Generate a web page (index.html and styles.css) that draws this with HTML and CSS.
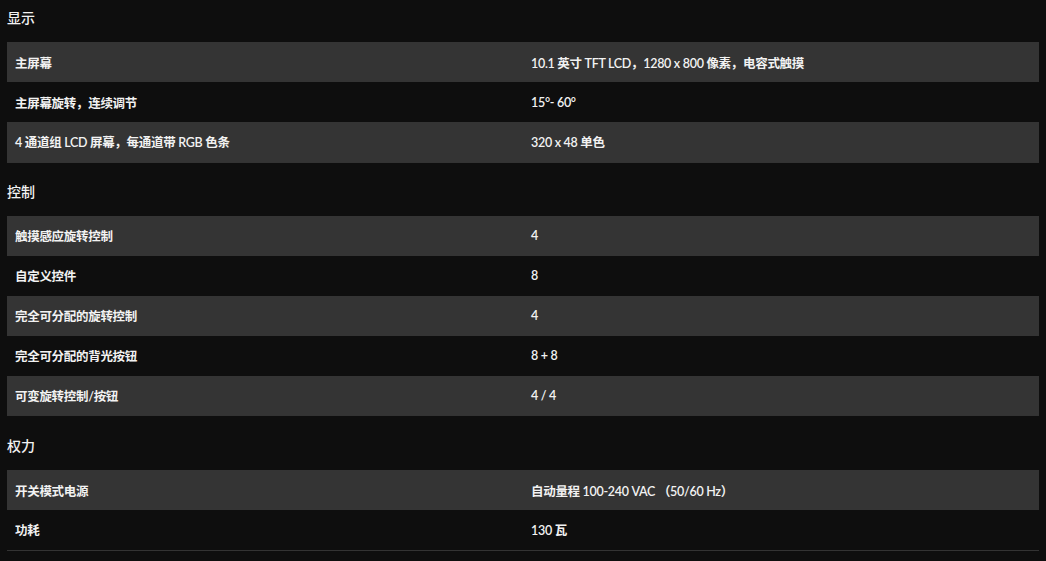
FILE: index.html
```html
<!DOCTYPE html>
<html lang="zh-CN">
<head>
<meta charset="utf-8">
<title>规格</title>
<link rel="stylesheet" href="styles.css">
</head>
<body>
<div class="specs">
  <section class="group">
    <h3 class="group-title">显示</h3>
    <table class="spec-table">
      <tr><td>主屏幕</td><td>10.1 英寸 TFT LCD，1280 x 800 像素，电容式触摸</td></tr>
      <tr><td>主屏幕旋转，连续调节</td><td>15°- 60°</td></tr>
      <tr><td>4 通道组 LCD 屏幕，每通道带 RGB 色条</td><td>320 x 48 单色</td></tr>
    </table>
  </section>
  <section class="group">
    <h3 class="group-title">控制</h3>
    <table class="spec-table">
      <tr><td>触摸感应旋转控制</td><td>4</td></tr>
      <tr><td>自定义控件</td><td>8</td></tr>
      <tr><td>完全可分配的旋转控制</td><td>4</td></tr>
      <tr><td>完全可分配的背光按钮</td><td>8 + 8</td></tr>
      <tr><td>可变旋转控制/按钮</td><td>4 / 4</td></tr>
    </table>
  </section>
  <section class="group">
    <h3 class="group-title">权力</h3>
    <table class="spec-table">
      <tr><td>开关模式电源</td><td>自动量程 100-240 VAC （50/60 Hz）</td></tr>
      <tr><td>功耗</td><td>130 瓦</td></tr>
    </table>
  </section>
</div>
</body>
</html>
```

FILE: styles.css
```css
html, body {
  margin: 0;
  padding: 0;
  background: #0e0e0e;
}
body {
  font-family: "Lato", "Noto Sans CJK SC", sans-serif;
  color: #f2f2f2;
}
.specs {
  padding: 0 7px;
}
.group + .group {
  margin-top: 11px;
}
.group:last-child {
  margin-top: 12px;
}
.group-title {
  margin: 0 0 6px 0;
  font-size: 14px;
  font-weight: 500;
  line-height: 36px;
  color: #f2f2f2;
}
.spec-table {
  width: 100%;
  border-collapse: collapse;
  table-layout: fixed;
  border-bottom: 1px solid #333;
}
.spec-table td {
  height: 40px;
  padding: 0 8px;
  box-sizing: border-box;
  font-size: 12.5px;
  font-weight: 600;
  letter-spacing: -0.3px;
  vertical-align: middle;
  width: 50%;
}
.spec-table tr:nth-child(odd) td {
  background: #343434;
}
```
